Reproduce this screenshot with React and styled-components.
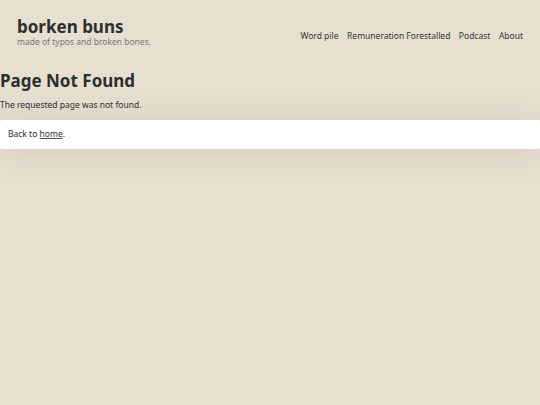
import styled, { createGlobalStyle } from 'styled-components';

const GlobalStyle = createGlobalStyle`
  html, body {
    margin: 0;
    padding: 0;
    background: #e6e0d1;
    font-family: "Noto Sans", "Open Sans", sans-serif;
    color: #2b2b2b;
  }
`;

const Page = styled.div`
  min-height: 405px;
  background: #e6e0d1;
`;

const Header = styled.header`
  display: flex;
  justify-content: space-between;
  align-items: flex-end;
  padding: 17px 17px 0 17px;
`;

const Brand = styled.div`
  display: flex;
  flex-direction: column;
`;

const Title = styled.a`
  font-size: 17px;
  font-weight: 700;
  line-height: 19px;
  color: #2e2e2e;
  text-decoration: none;
`;

const Tagline = styled.span`
  font-size: 8.5px;
  line-height: 11px;
  color: #7a7670;
`;

const Nav = styled.nav`
  display: flex;
  gap: 8.5px;
  padding-bottom: 6px;
`;

const NavLink = styled.a`
  font-size: 8.5px;
  color: #34362f;
  text-decoration: none;
`;

const Main = styled.main`
  padding-top: 23px;
`;

const Heading = styled.h1`
  margin: 0;
  font-size: 17px;
  font-weight: 700;
  line-height: 22px;
  color: #2e2e2e;
`;

const Lead = styled.p`
  margin: 7px 0 9px;
  font-size: 8.5px;
  line-height: 12px;
  color: #2e2e2e;
`;

const Card = styled.div`
  background: #ffffff;
  padding: 8px 8px 9px;
  font-size: 8.5px;
  line-height: 12px;
  border-radius: 2px;
  box-shadow: 0 2px 36px rgba(90, 70, 40, 0.14);
`;

const HomeLink = styled.a`
  color: #2e2e2e;
  text-decoration: underline;
  text-decoration-color: #4f5a3a;
`;

export default function App() {
  return (
    <Page>
      <GlobalStyle />
      <Header>
        <Brand>
          <Title href="#">borken buns</Title>
          <Tagline>made of typos and broken bones.</Tagline>
        </Brand>
        <Nav>
          <NavLink href="#">Word pile</NavLink>
          <NavLink href="#">Remuneration Forestalled</NavLink>
          <NavLink href="#">Podcast</NavLink>
          <NavLink href="#">About</NavLink>
        </Nav>
      </Header>
      <Main>
        <Heading>Page Not Found</Heading>
        <Lead>The requested page was not found.</Lead>
        <Card>
          Back to <HomeLink href="#">home</HomeLink>.
        </Card>
      </Main>
    </Page>
  );
}
